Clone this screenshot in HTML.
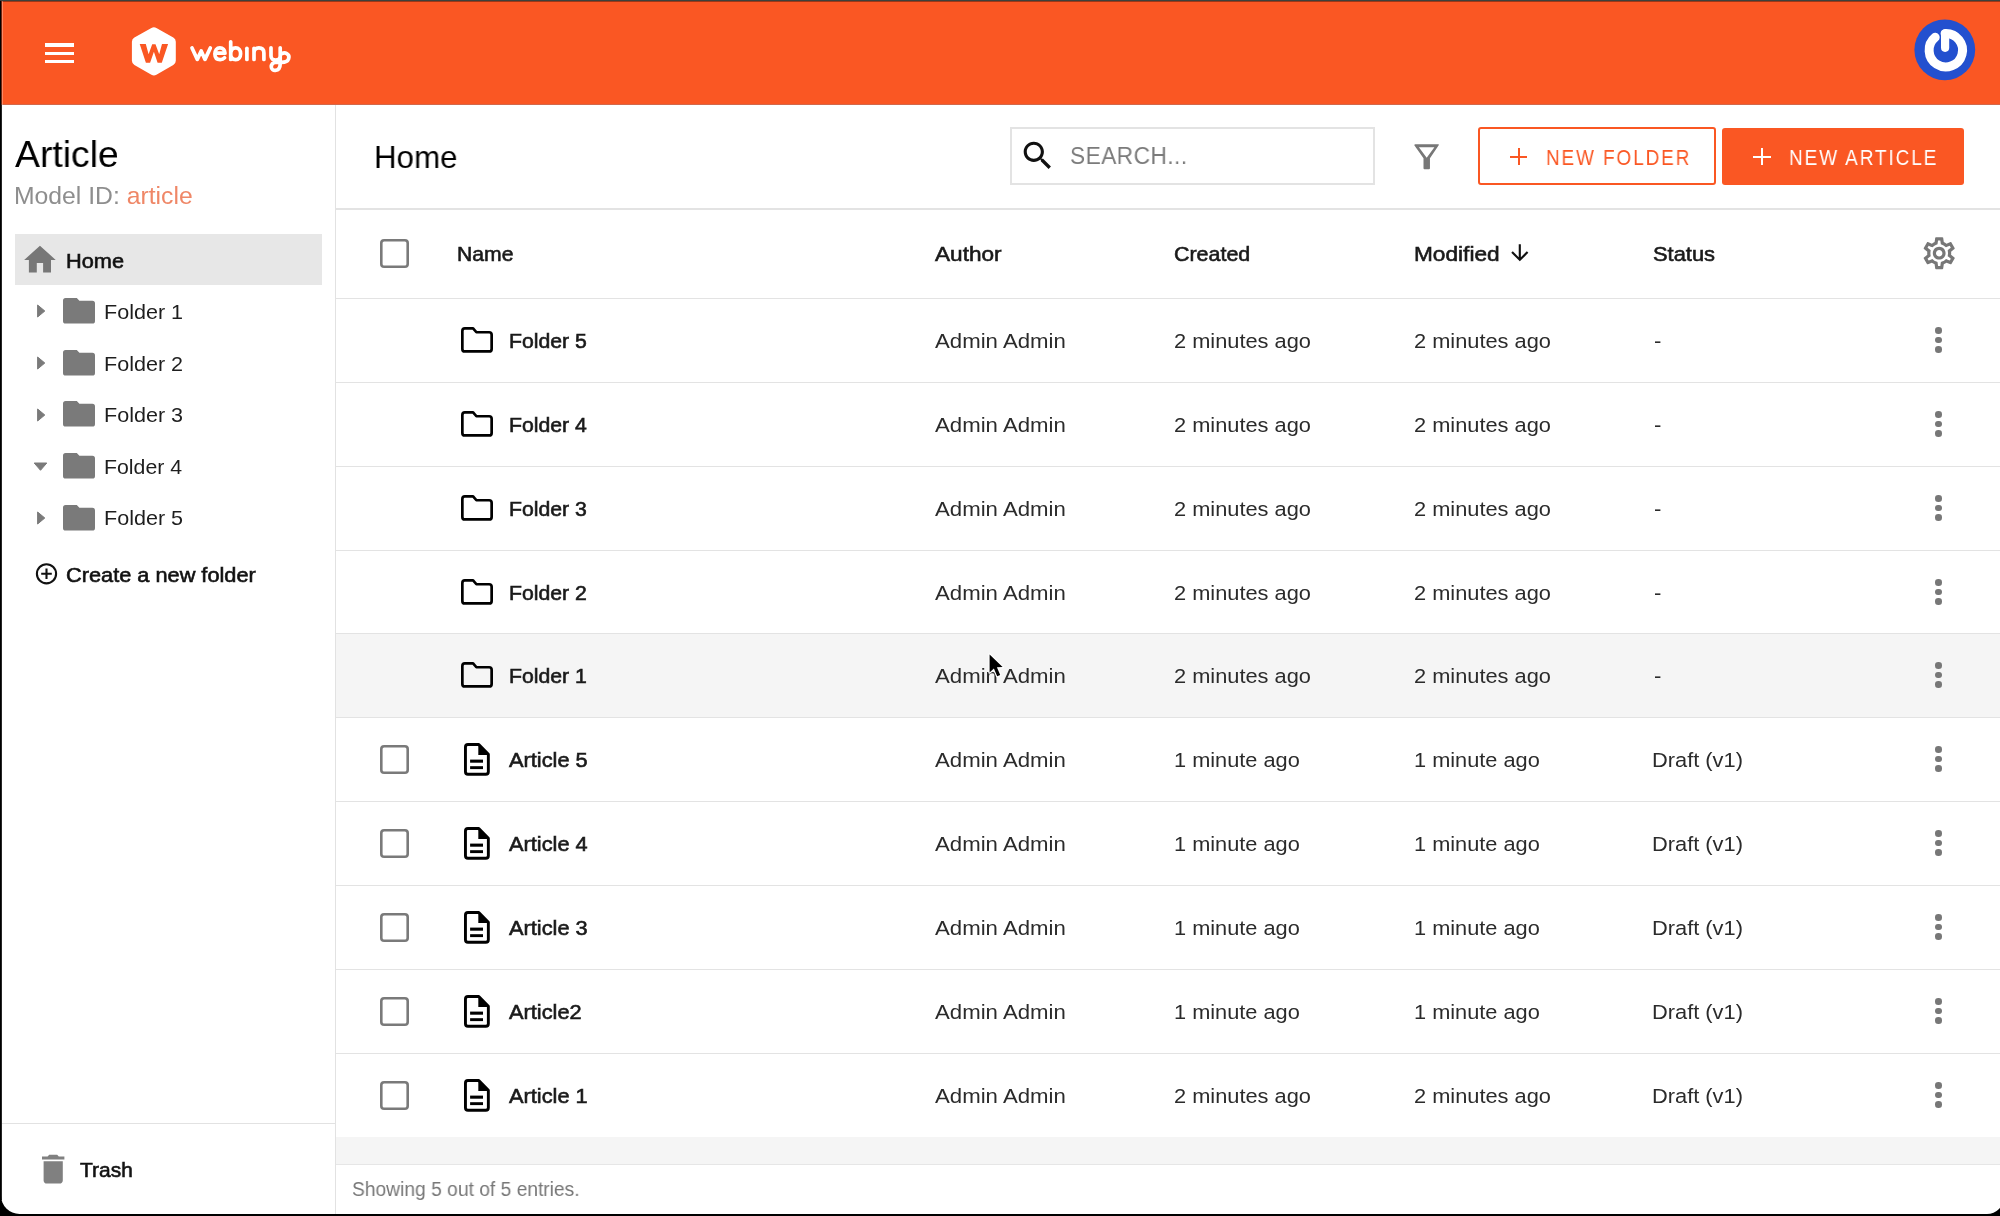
<!DOCTYPE html>
<html><head><meta charset="utf-8"><style>
html,body{margin:0;padding:0;width:2000px;height:1216px;overflow:hidden;background:#000;}
#app{position:absolute;left:1px;top:1px;width:2003px;height:1213px;background:#fff;border-radius:0 0 17px 18.5px;overflow:hidden;}
#topline{position:absolute;left:0;top:0;width:2000px;height:1px;background:#3b413d;}
.t{position:absolute;font-family:'Liberation Sans', sans-serif;line-height:1;white-space:nowrap;transform-origin:0 0;will-change:transform;}
.i{position:absolute;display:block;overflow:visible;}
.cb{position:absolute;width:23.6px;height:23.6px;border:2.7px solid #767676;border-radius:3.5px;}
.dot{position:absolute;width:6.6px;height:6.6px;border-radius:50%;background:#777;}
.hl{position:absolute;left:336px;width:1670px;height:1px;background:#e3e3e3;}
</style></head><body>
<div id="app">
<div id="rows" style="position:absolute;left:-1px;top:-1px;width:2005px;height:1216px;">
<!-- header -->
<div style="position:absolute;left:0;top:0;width:2005px;height:104px;background:#fa5723;"></div><div style="position:absolute;left:0;top:104px;width:2005px;height:1px;background:#d2694c;"></div>
<!-- hamburger -->
<div style="position:absolute;left:44.8px;top:43.3px;width:29.5px;height:3.3px;background:#fff"></div>
<div style="position:absolute;left:44.8px;top:51.5px;width:29.5px;height:3.3px;background:#fff"></div>
<div style="position:absolute;left:44.8px;top:59.6px;width:29.5px;height:3.3px;background:#fff"></div>
<!-- logo -->
<svg class="i" style="left:125px;top:20px" width="60" height="60" viewBox="125 20 60 60">
<path d="M151.4,27.9 Q153.9,26.6 156.4,27.9 L173.3,37.6 Q175.8,39 175.8,41.8 L175.8,60.8 Q175.8,63.6 173.3,65 L156.4,74.7 Q153.9,76.1 151.4,74.7 L134.4,65 Q131.9,63.6 131.9,60.8 L131.9,41.8 Q131.9,39 134.4,37.6 Z" fill="#fff"/>
<path d="M139.7,43.9 L145.8,43.9 L148.6,54.2 L152.2,44.2 L155.5,44.2 L159.2,54.2 L162,43.9 L168.1,43.9 L161.8,62.7 L157.6,62.7 L153.9,51.8 L150.1,62.7 L145.9,62.7 Z" fill="#fa5723"/>
</svg>
<svg class="i" style="left:185px;top:30px" width="110" height="50" viewBox="185 30 110 50">
<g fill="none" stroke="#fff" stroke-width="3.7" stroke-linecap="round" stroke-linejoin="round">
<path d="M192,48 L197.3,59.4 L201.2,51 L205,59.4 L210.3,48"/>
<path d="M214.9,53.2 L225,53.2 C225,49.8 222.8,47.8 219.9,47.8 C216.8,47.8 214.9,50.4 214.9,54 C214.9,57.7 217.1,59.6 220.2,59.6 C222.2,59.6 223.6,58.9 224.6,57.8"/>
<path d="M230.7,41.8 L230.7,59.4 M230.7,54 C230.7,50.3 232.6,47.8 235.7,47.8 C238.6,47.8 240.6,50.3 240.6,53.7 C240.6,57.2 238.6,59.6 235.7,59.6 C232.6,59.6 230.7,57.5 230.7,54"/>
<path d="M246.9,48.3 L246.9,59.4"/>
<path d="M254,59.4 L254,48.3 M254,53 C254,49.8 255.8,47.9 258.9,47.9 C262.1,47.9 263.9,49.8 263.9,53 L263.9,59.4"/>
<path d="M271,47.8 L271,56 C271,58.6 273,60.1 275.6,60.1 C278.2,60.1 280.2,58.6 280.2,56 M282,53.6 C283.5,52.8 285.3,52.8 286.8,53.6 C288.6,54.6 289.3,56.8 288.6,58.8 C287.7,61.3 284.8,62.3 281.5,62.3 L275.5,62.3 C272.8,62.3 271.2,64.5 271.3,67 C271.4,69.3 273.3,70.6 275.3,70.4 C278.3,70.1 280.2,67.6 280.2,64 L280.2,47.8"/>
</g></svg>
<!-- avatar -->
<svg class="i" style="left:1910px;top:15px" width="70" height="70" viewBox="1910 15 70 70">
<circle cx="1944.8" cy="49.8" r="30.4" fill="#2350cf"/>
<path d="M1935.2,37.3 A16.7,16.7 0 1 0 1945.1,33.5" fill="none" stroke="#fff" stroke-width="9" stroke-linecap="round"/>
<path d="M1945.1,33.5 L1945.1,47.8" fill="none" stroke="#fff" stroke-width="8.2" stroke-linecap="round"/>
</svg>

<!-- sidebar -->
<div style="position:absolute;left:335px;top:104.5px;width:1px;height:1112px;background:#e2e2e2"></div>
<div style="position:absolute;left:15px;top:234px;width:307px;height:51px;background:#e7e7e7"></div>
<svg class="i" style="left:21.3px;top:240.8px" width="37.9" height="37.9" viewBox="0 0 24 24"><path d="M10 20v-6h4v6h5v-8h3L12 3 2 12h3v8z" fill="#777"/></svg>
<svg class="i" style="left:36.2px;top:563.2px" width="22" height="22" viewBox="0 0 22 22"><circle cx="10.5" cy="10.8" r="9.6" fill="none" stroke="#111" stroke-width="2.1"/><path d="M5.2,10.8 H15.8 M10.5,5.5 V16.1" stroke="#111" stroke-width="2.1"/></svg>
<div style="position:absolute;left:2px;top:1122.5px;width:333px;height:1px;background:#e2e2e2"></div>
<svg class="i" style="left:34px;top:1149.9px" width="38.4" height="38.4" viewBox="0 0 24 24"><path d="M6 19c0 1.1.9 2 2 2h8c1.1 0 2-.9 2-2V7H6v12zM19 4h-3.5l-1-1h-5l-1 1H5v2h14V4z" fill="#808080"/></svg>

<!-- toolbar -->
<div style="position:absolute;left:1010px;top:127px;width:361px;height:54px;border:2px solid #e3e3e3;background:#fff"></div>
<svg class="i" style="left:1019.1px;top:137.3px" width="37.4" height="37.4" viewBox="0 0 24 24"><path d="M15.5 14h-.79l-.28-.27C15.41 12.59 16 11.11 16 9.5 16 5.91 13.09 3 9.5 3S3 5.91 3 9.5 5.91 16 9.5 16c1.61 0 3.090-.59 4.23-1.57l.27.28v.79l5 4.99L20.49 19l-4.990-5zm-6 0C7.01 14 5 11.99 5 9.5S7.01 5 9.5 5 14 7.01 14 9.5 11.99 14 9.5 14z" fill="#111"/></svg>
<svg class="i" style="left:1413.8px;top:143.7px" width="26" height="26" viewBox="0 0 26 26"><path d="M0.3,1.2 Q0.3,0.2 1.3,0.2 L24.3,0.2 Q25.3,0.2 24.7,1.2 L15.95,14.3 L15.95,24.2 Q15.95,25.2 14.95,25.2 L10.5,25.2 Q9.5,25.2 9.5,24.2 L9.5,14.3 Z M4.9,3.3 L12.7,13.65 L20.4,3.3 Z" fill="#777" fill-rule="evenodd"/></svg>
<div style="position:absolute;left:1478.1px;top:127.1px;width:233.5px;height:54.2px;border:2px solid #fa5723;border-radius:3px;"></div>
<div style="position:absolute;left:1509.75px;top:155.6px;width:17.5px;height:2px;background:#fa5723"></div>
<div style="position:absolute;left:1517.5px;top:148.1px;width:2px;height:17px;background:#fa5723"></div>
<div style="position:absolute;left:1722.2px;top:127.5px;width:241.8px;height:57.5px;background:#fa5723;border-radius:3px;"></div>
<div style="position:absolute;left:1753.4px;top:155.7px;width:17.5px;height:2px;background:#fff"></div>
<div style="position:absolute;left:1761.1px;top:148px;width:2px;height:17.3px;background:#fff"></div>
<div style="position:absolute;left:336px;top:208px;width:1670px;height:1.5px;background:#e3e3e3"></div>

<!-- table header -->
<svg class="i" style="left:380px;top:238.8px" width="29" height="29" viewBox="0 0 29 29"><rect x="1.3" y="1.3" width="26.4" height="26.4" rx="2.8" fill="none" stroke="#7a7a7a" stroke-width="2.6"/></svg>
<svg class="i" style="left:1506.9px;top:240.3px" width="25.6" height="25.6" viewBox="0 0 24 24"><path d="M20 12l-1.41-1.41L13 16.17V4h-2v12.17l-5.58-5.59L4 12l8 8 8-8z" fill="#111"/></svg>
<svg class="i" style="left:1919.8px;top:233.9px" width="38.4" height="38.4" viewBox="0 0 24 24"><path d="M19.43 12.98c.04-.32.07-.64.07-.98 0-.34-.03-.66-.07-.98l2.11-1.65c.19-.15.24-.42.12-.64l-2-3.46c-.09-.16-.26-.25-.44-.25-.06 0-.12.01-.17.03l-2.49 1c-.52-.4-1.080-.73-1.69-.98l-.38-2.65C14.46 2.18 14.25 2 14 2h-4c-.25 0-.46.18-.49.42l-.38 2.65c-.61.25-1.17.59-1.69.98l-2.49-1c-.06-.02-.12-.03-.18-.03-.17 0-.34.09-.43.25l-2 3.46c-.13.22-.07.49.12.64l2.11 1.65c-.04.32-.07.65-.07.98 0 .33.03.66.07.98l-2.11 1.65c-.19.15-.24.42-.12.64l2 3.46c.09.16.26.25.44.25.06 0 .12-.01.17-.03l2.49-1c.52.4 1.080.73 1.69.98l.38 2.65c.03.24.24.42.49.42h4c.25 0 .46-.18.49-.42l.38-2.65c.61-.25 1.17-.59 1.69-.98l2.49 1c.06.02.12.03.18.03.17 0 .34-.09.43-.25l2-3.46c.12-.22.07-.49-.12-.64l-2.11-1.65zm-1.98-1.71c.04.31.05.52.05.73 0 .21-.02.43-.05.73l-.14 1.13.89.7 1.080.84-.7 1.21-1.27-.51-1.040-.42-.9.68c-.43.32-.84.56-1.25.73l-1.060.43-.16 1.13-.2 1.35h-1.4l-.19-1.35-.16-1.13-1.060-.43c-.43-.18-.83-.41-1.23-.71l-.91-.7-1.060.43-1.27.51-.7-1.21 1.080-.84.89-.7-.14-1.13c-.03-.31-.05-.54-.05-.74s.02-.43.05-.73l.14-1.13-.89-.7-1.080-.84.7-1.21 1.27.51 1.040.42.9-.68c.43-.32.84-.56 1.25-.73l1.060-.43.16-1.13.2-1.35h1.39l.19 1.35.16 1.13 1.060.43c.43.18.83.41 1.23.71l.91.7 1.060-.43 1.27-.51.7 1.21-1.070.85-.89.7.14 1.13zM12 8c-2.21 0-4 1.79-4 4s1.79 4 4 4 4-1.79 4-4-1.79-4-4-4zm0 6c-1.1 0-2-.9-2-2s.9-2 2-2 2 .9 2 2-.9 2-2 2z" fill="#777"/></svg>

<!-- rows -->
<div style="position:absolute;left:336px;top:633px;width:1670px;height:84px;background:#f5f5f5"></div>
<div class="hl" style="top:298px"></div><div class="hl" style="top:382px"></div><div class="hl" style="top:466px"></div><div class="hl" style="top:550px"></div><div class="hl" style="top:633px"></div><div class="hl" style="top:717px"></div><div class="hl" style="top:801px"></div><div class="hl" style="top:885px"></div><div class="hl" style="top:969px"></div><div class="hl" style="top:1053px"></div>
<div style="position:absolute;left:336px;top:1137px;width:1670px;height:27px;background:#f5f5f5"></div>
<div style="position:absolute;left:336px;top:1164px;width:1670px;height:1px;background:#e6e6e6"></div>
<svg class="i" style="left:36px;top:304.30px" width="10" height="14" viewBox="0 0 10 14"><path d="M1.6,1 L8.8,7 L1.6,13 Z" fill="#7a7a7a" stroke="#7a7a7a" stroke-width="1" stroke-linejoin="round"/></svg><svg class="i" style="left:63.1px;top:298.2px" width="32" height="26" viewBox="0 0 32 26"><path d="M0,2.6 Q0,0 2.6,0 L13.8,0 L16.4,2.8 L29.4,2.8 Q32,2.8 32,5.4 L32,23 Q32,25.6 29.4,25.6 L2.6,25.6 Q0,25.6 0,23 Z" fill="#7a7a7a"/></svg><svg class="i" style="left:36px;top:355.90px" width="10" height="14" viewBox="0 0 10 14"><path d="M1.6,1 L8.8,7 L1.6,13 Z" fill="#7a7a7a" stroke="#7a7a7a" stroke-width="1" stroke-linejoin="round"/></svg><svg class="i" style="left:63.1px;top:349.8px" width="32" height="26" viewBox="0 0 32 26"><path d="M0,2.6 Q0,0 2.6,0 L13.8,0 L16.4,2.8 L29.4,2.8 Q32,2.8 32,5.4 L32,23 Q32,25.6 29.4,25.6 L2.6,25.6 Q0,25.6 0,23 Z" fill="#7a7a7a"/></svg><svg class="i" style="left:36px;top:407.50px" width="10" height="14" viewBox="0 0 10 14"><path d="M1.6,1 L8.8,7 L1.6,13 Z" fill="#7a7a7a" stroke="#7a7a7a" stroke-width="1" stroke-linejoin="round"/></svg><svg class="i" style="left:63.1px;top:401.4px" width="32" height="26" viewBox="0 0 32 26"><path d="M0,2.6 Q0,0 2.6,0 L13.8,0 L16.4,2.8 L29.4,2.8 Q32,2.8 32,5.4 L32,23 Q32,25.6 29.4,25.6 L2.6,25.6 Q0,25.6 0,23 Z" fill="#7a7a7a"/></svg><svg class="i" style="left:33px;top:461.10px" width="15" height="10" viewBox="0 0 15 10"><path d="M1.2,2 L13.8,2 L7.5,9.3 Z" fill="#7a7a7a" stroke="#7a7a7a" stroke-width="1" stroke-linejoin="round"/></svg><svg class="i" style="left:63.1px;top:453.0px" width="32" height="26" viewBox="0 0 32 26"><path d="M0,2.6 Q0,0 2.6,0 L13.8,0 L16.4,2.8 L29.4,2.8 Q32,2.8 32,5.4 L32,23 Q32,25.6 29.4,25.6 L2.6,25.6 Q0,25.6 0,23 Z" fill="#7a7a7a"/></svg><svg class="i" style="left:36px;top:510.70px" width="10" height="14" viewBox="0 0 10 14"><path d="M1.6,1 L8.8,7 L1.6,13 Z" fill="#7a7a7a" stroke="#7a7a7a" stroke-width="1" stroke-linejoin="round"/></svg><svg class="i" style="left:63.1px;top:504.6px" width="32" height="26" viewBox="0 0 32 26"><path d="M0,2.6 Q0,0 2.6,0 L13.8,0 L16.4,2.8 L29.4,2.8 Q32,2.8 32,5.4 L32,23 Q32,25.6 29.4,25.6 L2.6,25.6 Q0,25.6 0,23 Z" fill="#7a7a7a"/></svg><svg class="i" style="left:460.8px;top:327.1px" width="32" height="26" viewBox="0 0 32 26"><path d="M1.35,3.9 Q1.35,1.35 3.9,1.35 L12.1,1.35 L15.4,5.25 L28.1,5.25 Q30.65,5.25 30.65,7.8 L30.65,21.9 Q30.65,24.45 28.1,24.45 L3.9,24.45 Q1.35,24.45 1.35,21.9 Z" fill="none" stroke="#000" stroke-width="2.7" stroke-linejoin="round"/></svg><div class="dot" style="left:1935.30px;top:327.00px"></div><div class="dot" style="left:1935.30px;top:336.70px"></div><div class="dot" style="left:1935.30px;top:346.20px"></div><svg class="i" style="left:460.8px;top:411.1px" width="32" height="26" viewBox="0 0 32 26"><path d="M1.35,3.9 Q1.35,1.35 3.9,1.35 L12.1,1.35 L15.4,5.25 L28.1,5.25 Q30.65,5.25 30.65,7.8 L30.65,21.9 Q30.65,24.45 28.1,24.45 L3.9,24.45 Q1.35,24.45 1.35,21.9 Z" fill="none" stroke="#000" stroke-width="2.7" stroke-linejoin="round"/></svg><div class="dot" style="left:1935.30px;top:411.00px"></div><div class="dot" style="left:1935.30px;top:420.70px"></div><div class="dot" style="left:1935.30px;top:430.20px"></div><svg class="i" style="left:460.8px;top:495.1px" width="32" height="26" viewBox="0 0 32 26"><path d="M1.35,3.9 Q1.35,1.35 3.9,1.35 L12.1,1.35 L15.4,5.25 L28.1,5.25 Q30.65,5.25 30.65,7.8 L30.65,21.9 Q30.65,24.45 28.1,24.45 L3.9,24.45 Q1.35,24.45 1.35,21.9 Z" fill="none" stroke="#000" stroke-width="2.7" stroke-linejoin="round"/></svg><div class="dot" style="left:1935.30px;top:495.00px"></div><div class="dot" style="left:1935.30px;top:504.70px"></div><div class="dot" style="left:1935.30px;top:514.20px"></div><svg class="i" style="left:460.8px;top:579.1px" width="32" height="26" viewBox="0 0 32 26"><path d="M1.35,3.9 Q1.35,1.35 3.9,1.35 L12.1,1.35 L15.4,5.25 L28.1,5.25 Q30.65,5.25 30.65,7.8 L30.65,21.9 Q30.65,24.45 28.1,24.45 L3.9,24.45 Q1.35,24.45 1.35,21.9 Z" fill="none" stroke="#000" stroke-width="2.7" stroke-linejoin="round"/></svg><div class="dot" style="left:1935.30px;top:579.00px"></div><div class="dot" style="left:1935.30px;top:588.70px"></div><div class="dot" style="left:1935.30px;top:598.20px"></div><svg class="i" style="left:460.8px;top:662.1px" width="32" height="26" viewBox="0 0 32 26"><path d="M1.35,3.9 Q1.35,1.35 3.9,1.35 L12.1,1.35 L15.4,5.25 L28.1,5.25 Q30.65,5.25 30.65,7.8 L30.65,21.9 Q30.65,24.45 28.1,24.45 L3.9,24.45 Q1.35,24.45 1.35,21.9 Z" fill="none" stroke="#000" stroke-width="2.7" stroke-linejoin="round"/></svg><div class="dot" style="left:1935.30px;top:662.00px"></div><div class="dot" style="left:1935.30px;top:671.70px"></div><div class="dot" style="left:1935.30px;top:681.20px"></div><svg class="i" style="left:380px;top:745px" width="29" height="29" viewBox="0 0 29 29"><rect x="1.3" y="1.3" width="26.4" height="26.4" rx="2.8" fill="none" stroke="#7a7a7a" stroke-width="2.6"/></svg><svg class="i" style="left:464px;top:742.8px" width="26" height="33" viewBox="0 0 26 33"><path d="M1.45,4 Q1.45,1.45 4,1.45 L14.8,1.45 L24.35,11.2 L24.35,28.7 Q24.35,31.25 21.8,31.25 L4,31.25 Q1.45,31.25 1.45,28.7 Z" fill="none" stroke="#000" stroke-width="2.9" stroke-linejoin="round"/><path d="M14.3,1 L25,11.5 L25,11.9 L14.3,11.9 Z" fill="#000"/><rect x="6.1" y="16.6" width="12.9" height="3.1" fill="#000"/><rect x="6.1" y="23.2" width="12.9" height="2.9" fill="#000"/></svg><div class="dot" style="left:1935.30px;top:746.00px"></div><div class="dot" style="left:1935.30px;top:755.70px"></div><div class="dot" style="left:1935.30px;top:765.20px"></div><svg class="i" style="left:380px;top:829px" width="29" height="29" viewBox="0 0 29 29"><rect x="1.3" y="1.3" width="26.4" height="26.4" rx="2.8" fill="none" stroke="#7a7a7a" stroke-width="2.6"/></svg><svg class="i" style="left:464px;top:826.8px" width="26" height="33" viewBox="0 0 26 33"><path d="M1.45,4 Q1.45,1.45 4,1.45 L14.8,1.45 L24.35,11.2 L24.35,28.7 Q24.35,31.25 21.8,31.25 L4,31.25 Q1.45,31.25 1.45,28.7 Z" fill="none" stroke="#000" stroke-width="2.9" stroke-linejoin="round"/><path d="M14.3,1 L25,11.5 L25,11.9 L14.3,11.9 Z" fill="#000"/><rect x="6.1" y="16.6" width="12.9" height="3.1" fill="#000"/><rect x="6.1" y="23.2" width="12.9" height="2.9" fill="#000"/></svg><div class="dot" style="left:1935.30px;top:830.00px"></div><div class="dot" style="left:1935.30px;top:839.70px"></div><div class="dot" style="left:1935.30px;top:849.20px"></div><svg class="i" style="left:380px;top:913px" width="29" height="29" viewBox="0 0 29 29"><rect x="1.3" y="1.3" width="26.4" height="26.4" rx="2.8" fill="none" stroke="#7a7a7a" stroke-width="2.6"/></svg><svg class="i" style="left:464px;top:910.8px" width="26" height="33" viewBox="0 0 26 33"><path d="M1.45,4 Q1.45,1.45 4,1.45 L14.8,1.45 L24.35,11.2 L24.35,28.7 Q24.35,31.25 21.8,31.25 L4,31.25 Q1.45,31.25 1.45,28.7 Z" fill="none" stroke="#000" stroke-width="2.9" stroke-linejoin="round"/><path d="M14.3,1 L25,11.5 L25,11.9 L14.3,11.9 Z" fill="#000"/><rect x="6.1" y="16.6" width="12.9" height="3.1" fill="#000"/><rect x="6.1" y="23.2" width="12.9" height="2.9" fill="#000"/></svg><div class="dot" style="left:1935.30px;top:914.00px"></div><div class="dot" style="left:1935.30px;top:923.70px"></div><div class="dot" style="left:1935.30px;top:933.20px"></div><svg class="i" style="left:380px;top:997px" width="29" height="29" viewBox="0 0 29 29"><rect x="1.3" y="1.3" width="26.4" height="26.4" rx="2.8" fill="none" stroke="#7a7a7a" stroke-width="2.6"/></svg><svg class="i" style="left:464px;top:994.8px" width="26" height="33" viewBox="0 0 26 33"><path d="M1.45,4 Q1.45,1.45 4,1.45 L14.8,1.45 L24.35,11.2 L24.35,28.7 Q24.35,31.25 21.8,31.25 L4,31.25 Q1.45,31.25 1.45,28.7 Z" fill="none" stroke="#000" stroke-width="2.9" stroke-linejoin="round"/><path d="M14.3,1 L25,11.5 L25,11.9 L14.3,11.9 Z" fill="#000"/><rect x="6.1" y="16.6" width="12.9" height="3.1" fill="#000"/><rect x="6.1" y="23.2" width="12.9" height="2.9" fill="#000"/></svg><div class="dot" style="left:1935.30px;top:998.00px"></div><div class="dot" style="left:1935.30px;top:1007.70px"></div><div class="dot" style="left:1935.30px;top:1017.20px"></div><svg class="i" style="left:380px;top:1081px" width="29" height="29" viewBox="0 0 29 29"><rect x="1.3" y="1.3" width="26.4" height="26.4" rx="2.8" fill="none" stroke="#7a7a7a" stroke-width="2.6"/></svg><svg class="i" style="left:464px;top:1078.8px" width="26" height="33" viewBox="0 0 26 33"><path d="M1.45,4 Q1.45,1.45 4,1.45 L14.8,1.45 L24.35,11.2 L24.35,28.7 Q24.35,31.25 21.8,31.25 L4,31.25 Q1.45,31.25 1.45,28.7 Z" fill="none" stroke="#000" stroke-width="2.9" stroke-linejoin="round"/><path d="M14.3,1 L25,11.5 L25,11.9 L14.3,11.9 Z" fill="#000"/><rect x="6.1" y="16.6" width="12.9" height="3.1" fill="#000"/><rect x="6.1" y="23.2" width="12.9" height="2.9" fill="#000"/></svg><div class="dot" style="left:1935.30px;top:1082.00px"></div><div class="dot" style="left:1935.30px;top:1091.70px"></div><div class="dot" style="left:1935.30px;top:1101.20px"></div>
<div class="t" style="left:15.00px;top:136.00px;font-weight:400;font-size:37.7px;color:#000;letter-spacing:0px;transform:scaleX(0.9903);">Article</div>
<div class="t" style="left:13.99px;top:184.00px;font-weight:400;font-size:24.6px;color:#8e8e8e;letter-spacing:0px;transform:scaleX(1.0057);">Model ID: <span style="color:#ef8767">article</span></div>
<div class="t" style="left:66.46px;top:249.80px;font-weight:400;-webkit-text-stroke:0.6px #111;font-size:21px;color:#111;letter-spacing:0px;transform:scaleX(1.0364);">Home</div>
<div class="t" style="left:104.45px;top:301.00px;font-weight:400;font-size:21px;color:#1e1e1e;letter-spacing:0px;transform:scaleX(1.0270);">Folder 1</div>
<div class="t" style="left:104.45px;top:352.60px;font-weight:400;font-size:21px;color:#1e1e1e;letter-spacing:0px;transform:scaleX(1.0270);">Folder 2</div>
<div class="t" style="left:104.45px;top:404.20px;font-weight:400;font-size:21px;color:#1e1e1e;letter-spacing:0px;transform:scaleX(1.0270);">Folder 3</div>
<div class="t" style="left:104.47px;top:455.80px;font-weight:400;font-size:21px;color:#1e1e1e;letter-spacing:0px;transform:scaleX(1.0133);">Folder 4</div>
<div class="t" style="left:104.45px;top:507.40px;font-weight:400;font-size:21px;color:#1e1e1e;letter-spacing:0px;transform:scaleX(1.0270);">Folder 5</div>
<div class="t" style="left:66.44px;top:564.60px;font-weight:400;-webkit-text-stroke:0.6px #111;font-size:20.5px;color:#111;letter-spacing:0px;transform:scaleX(1.0607);">Create a new folder</div>
<div class="t" style="left:79.80px;top:1158.90px;font-weight:400;-webkit-text-stroke:0.6px #111;font-size:21px;color:#111;letter-spacing:0px;transform:scaleX(0.9981);">Trash</div>
<div class="t" style="left:374.03px;top:142.10px;font-weight:400;font-size:31.6px;color:#000;letter-spacing:0px;transform:scaleX(0.9900);">Home</div>
<div class="t" style="left:1069.82px;top:144.25px;font-weight:400;font-size:24.3px;color:#7b7b7b;letter-spacing:0.5px;transform:scaleX(0.9329);">SEARCH...</div>
<div class="t" style="left:1546.01px;top:146.60px;font-weight:400;font-size:21.7px;color:#fa5723;letter-spacing:2.2px;transform:scaleX(0.8720);">NEW FOLDER</div>
<div class="t" style="left:1789.27px;top:146.90px;font-weight:400;font-size:22px;color:#fff;letter-spacing:2.2px;transform:scaleX(0.8631);">NEW ARTICLE</div>
<div class="t" style="left:457.38px;top:244.20px;font-weight:400;-webkit-text-stroke:0.6px #1a1a1a;font-size:20.7px;color:#1a1a1a;letter-spacing:0px;transform:scaleX(1.0222);">Name</div>
<div class="t" style="left:935.00px;top:244.20px;font-weight:400;-webkit-text-stroke:0.6px #1a1a1a;font-size:20.7px;color:#1a1a1a;letter-spacing:0px;transform:scaleX(1.0918);">Author</div>
<div class="t" style="left:1173.96px;top:244.20px;font-weight:400;-webkit-text-stroke:0.6px #1a1a1a;font-size:20.7px;color:#1a1a1a;letter-spacing:0px;transform:scaleX(1.0361);">Created</div>
<div class="t" style="left:1414.11px;top:244.20px;font-weight:400;-webkit-text-stroke:0.6px #1a1a1a;font-size:20.7px;color:#1a1a1a;letter-spacing:0px;transform:scaleX(1.0947);">Modified</div>
<div class="t" style="left:1653.34px;top:244.20px;font-weight:400;-webkit-text-stroke:0.6px #1a1a1a;font-size:20.7px;color:#1a1a1a;letter-spacing:0px;transform:scaleX(1.0579);">Status</div>
<div class="t" style="left:509.36px;top:331.00px;font-weight:400;-webkit-text-stroke:0.6px #1a1a1a;font-size:20.5px;color:#1a1a1a;letter-spacing:0px;transform:scaleX(1.0351);">Folder 5</div>
<div class="t" style="left:935.00px;top:331.00px;font-weight:400;font-size:20.5px;color:#2b2b2b;letter-spacing:0px;transform:scaleX(1.0833);">Admin Admin</div>
<div class="t" style="left:1173.94px;top:331.00px;font-weight:400;font-size:20.5px;color:#2b2b2b;letter-spacing:0px;transform:scaleX(1.0630);">2 minutes ago</div>
<div class="t" style="left:1414.24px;top:331.00px;font-weight:400;font-size:20.5px;color:#2b2b2b;letter-spacing:0px;transform:scaleX(1.0630);">2 minutes ago</div>
<div class="t" style="left:1653.52px;top:331.00px;font-weight:400;font-size:20.5px;color:#2b2b2b;letter-spacing:0px;transform:scaleX(1.0800);">-</div>
<div class="t" style="left:509.36px;top:415.00px;font-weight:400;-webkit-text-stroke:0.6px #1a1a1a;font-size:20.5px;color:#1a1a1a;letter-spacing:0px;transform:scaleX(1.0351);">Folder 4</div>
<div class="t" style="left:935.00px;top:415.00px;font-weight:400;font-size:20.5px;color:#2b2b2b;letter-spacing:0px;transform:scaleX(1.0833);">Admin Admin</div>
<div class="t" style="left:1173.94px;top:415.00px;font-weight:400;font-size:20.5px;color:#2b2b2b;letter-spacing:0px;transform:scaleX(1.0630);">2 minutes ago</div>
<div class="t" style="left:1414.24px;top:415.00px;font-weight:400;font-size:20.5px;color:#2b2b2b;letter-spacing:0px;transform:scaleX(1.0630);">2 minutes ago</div>
<div class="t" style="left:1653.52px;top:415.00px;font-weight:400;font-size:20.5px;color:#2b2b2b;letter-spacing:0px;transform:scaleX(1.0800);">-</div>
<div class="t" style="left:509.36px;top:499.00px;font-weight:400;-webkit-text-stroke:0.6px #1a1a1a;font-size:20.5px;color:#1a1a1a;letter-spacing:0px;transform:scaleX(1.0351);">Folder 3</div>
<div class="t" style="left:935.00px;top:499.00px;font-weight:400;font-size:20.5px;color:#2b2b2b;letter-spacing:0px;transform:scaleX(1.0833);">Admin Admin</div>
<div class="t" style="left:1173.94px;top:499.00px;font-weight:400;font-size:20.5px;color:#2b2b2b;letter-spacing:0px;transform:scaleX(1.0630);">2 minutes ago</div>
<div class="t" style="left:1414.24px;top:499.00px;font-weight:400;font-size:20.5px;color:#2b2b2b;letter-spacing:0px;transform:scaleX(1.0630);">2 minutes ago</div>
<div class="t" style="left:1653.52px;top:499.00px;font-weight:400;font-size:20.5px;color:#2b2b2b;letter-spacing:0px;transform:scaleX(1.0800);">-</div>
<div class="t" style="left:509.36px;top:583.00px;font-weight:400;-webkit-text-stroke:0.6px #1a1a1a;font-size:20.5px;color:#1a1a1a;letter-spacing:0px;transform:scaleX(1.0351);">Folder 2</div>
<div class="t" style="left:935.00px;top:583.00px;font-weight:400;font-size:20.5px;color:#2b2b2b;letter-spacing:0px;transform:scaleX(1.0833);">Admin Admin</div>
<div class="t" style="left:1173.94px;top:583.00px;font-weight:400;font-size:20.5px;color:#2b2b2b;letter-spacing:0px;transform:scaleX(1.0630);">2 minutes ago</div>
<div class="t" style="left:1414.24px;top:583.00px;font-weight:400;font-size:20.5px;color:#2b2b2b;letter-spacing:0px;transform:scaleX(1.0630);">2 minutes ago</div>
<div class="t" style="left:1653.52px;top:583.00px;font-weight:400;font-size:20.5px;color:#2b2b2b;letter-spacing:0px;transform:scaleX(1.0800);">-</div>
<div class="t" style="left:509.36px;top:666.00px;font-weight:400;-webkit-text-stroke:0.6px #1a1a1a;font-size:20.5px;color:#1a1a1a;letter-spacing:0px;transform:scaleX(1.0351);">Folder 1</div>
<div class="t" style="left:935.00px;top:666.00px;font-weight:400;font-size:20.5px;color:#2b2b2b;letter-spacing:0px;transform:scaleX(1.0833);">Admin Admin</div>
<div class="t" style="left:1173.94px;top:666.00px;font-weight:400;font-size:20.5px;color:#2b2b2b;letter-spacing:0px;transform:scaleX(1.0630);">2 minutes ago</div>
<div class="t" style="left:1414.24px;top:666.00px;font-weight:400;font-size:20.5px;color:#2b2b2b;letter-spacing:0px;transform:scaleX(1.0630);">2 minutes ago</div>
<div class="t" style="left:1653.52px;top:666.00px;font-weight:400;font-size:20.5px;color:#2b2b2b;letter-spacing:0px;transform:scaleX(1.0800);">-</div>
<div class="t" style="left:509.30px;top:750.00px;font-weight:400;-webkit-text-stroke:0.6px #1a1a1a;font-size:20.5px;color:#1a1a1a;letter-spacing:0px;transform:scaleX(1.0622);">Article 5</div>
<div class="t" style="left:935.00px;top:750.00px;font-weight:400;font-size:20.5px;color:#2b2b2b;letter-spacing:0px;transform:scaleX(1.0833);">Admin Admin</div>
<div class="t" style="left:1173.94px;top:750.00px;font-weight:400;font-size:20.5px;color:#2b2b2b;letter-spacing:0px;transform:scaleX(1.0615);">1 minute ago</div>
<div class="t" style="left:1414.24px;top:750.00px;font-weight:400;font-size:20.5px;color:#2b2b2b;letter-spacing:0px;transform:scaleX(1.0615);">1 minute ago</div>
<div class="t" style="left:1652.47px;top:750.00px;font-weight:400;font-size:20.5px;color:#2b2b2b;letter-spacing:0px;transform:scaleX(1.0646);">Draft (v1)</div>
<div class="t" style="left:509.30px;top:834.00px;font-weight:400;-webkit-text-stroke:0.6px #1a1a1a;font-size:20.5px;color:#1a1a1a;letter-spacing:0px;transform:scaleX(1.0622);">Article 4</div>
<div class="t" style="left:935.00px;top:834.00px;font-weight:400;font-size:20.5px;color:#2b2b2b;letter-spacing:0px;transform:scaleX(1.0833);">Admin Admin</div>
<div class="t" style="left:1173.94px;top:834.00px;font-weight:400;font-size:20.5px;color:#2b2b2b;letter-spacing:0px;transform:scaleX(1.0615);">1 minute ago</div>
<div class="t" style="left:1414.24px;top:834.00px;font-weight:400;font-size:20.5px;color:#2b2b2b;letter-spacing:0px;transform:scaleX(1.0615);">1 minute ago</div>
<div class="t" style="left:1652.47px;top:834.00px;font-weight:400;font-size:20.5px;color:#2b2b2b;letter-spacing:0px;transform:scaleX(1.0646);">Draft (v1)</div>
<div class="t" style="left:509.30px;top:918.00px;font-weight:400;-webkit-text-stroke:0.6px #1a1a1a;font-size:20.5px;color:#1a1a1a;letter-spacing:0px;transform:scaleX(1.0622);">Article 3</div>
<div class="t" style="left:935.00px;top:918.00px;font-weight:400;font-size:20.5px;color:#2b2b2b;letter-spacing:0px;transform:scaleX(1.0833);">Admin Admin</div>
<div class="t" style="left:1173.94px;top:918.00px;font-weight:400;font-size:20.5px;color:#2b2b2b;letter-spacing:0px;transform:scaleX(1.0615);">1 minute ago</div>
<div class="t" style="left:1414.24px;top:918.00px;font-weight:400;font-size:20.5px;color:#2b2b2b;letter-spacing:0px;transform:scaleX(1.0615);">1 minute ago</div>
<div class="t" style="left:1652.47px;top:918.00px;font-weight:400;font-size:20.5px;color:#2b2b2b;letter-spacing:0px;transform:scaleX(1.0646);">Draft (v1)</div>
<div class="t" style="left:509.30px;top:1002.00px;font-weight:400;-webkit-text-stroke:0.6px #1a1a1a;font-size:20.5px;color:#1a1a1a;letter-spacing:0px;transform:scaleX(1.0622);">Article2</div>
<div class="t" style="left:935.00px;top:1002.00px;font-weight:400;font-size:20.5px;color:#2b2b2b;letter-spacing:0px;transform:scaleX(1.0833);">Admin Admin</div>
<div class="t" style="left:1173.94px;top:1002.00px;font-weight:400;font-size:20.5px;color:#2b2b2b;letter-spacing:0px;transform:scaleX(1.0615);">1 minute ago</div>
<div class="t" style="left:1414.24px;top:1002.00px;font-weight:400;font-size:20.5px;color:#2b2b2b;letter-spacing:0px;transform:scaleX(1.0615);">1 minute ago</div>
<div class="t" style="left:1652.47px;top:1002.00px;font-weight:400;font-size:20.5px;color:#2b2b2b;letter-spacing:0px;transform:scaleX(1.0646);">Draft (v1)</div>
<div class="t" style="left:509.30px;top:1086.00px;font-weight:400;-webkit-text-stroke:0.6px #1a1a1a;font-size:20.5px;color:#1a1a1a;letter-spacing:0px;transform:scaleX(1.0622);">Article 1</div>
<div class="t" style="left:935.00px;top:1086.00px;font-weight:400;font-size:20.5px;color:#2b2b2b;letter-spacing:0px;transform:scaleX(1.0833);">Admin Admin</div>
<div class="t" style="left:1173.94px;top:1086.00px;font-weight:400;font-size:20.5px;color:#2b2b2b;letter-spacing:0px;transform:scaleX(1.0630);">2 minutes ago</div>
<div class="t" style="left:1414.24px;top:1086.00px;font-weight:400;font-size:20.5px;color:#2b2b2b;letter-spacing:0px;transform:scaleX(1.0630);">2 minutes ago</div>
<div class="t" style="left:1652.47px;top:1086.00px;font-weight:400;font-size:20.5px;color:#2b2b2b;letter-spacing:0px;transform:scaleX(1.0646);">Draft (v1)</div>
<div class="t" style="left:352.05px;top:1179.40px;font-weight:400;font-size:20.3px;color:#777;letter-spacing:0px;transform:scaleX(0.9479);">Showing 5 out of 5 entries.</div>
<!-- cursor -->
<svg class="i" style="left:980px;top:645px;will-change:transform;z-index:5" width="30" height="40" viewBox="980 645 30 40"><path d="M989.6,654.4 L989.6,672.5 L993.9,668.4 L997.2,676.3 L1000.2,675 L996.9,667.3 L1002.6,667.1 Z" fill="#000" stroke="#fff" stroke-width="2.4" stroke-linejoin="round" paint-order="stroke"/></svg>
</div>
</div>
<div id="topline"></div><div style="position:absolute;left:2px;top:1px;width:2000px;height:1px;background:rgba(40,20,10,0.45)"></div><div style="position:absolute;left:2px;top:1px;width:1px;height:104px;background:rgba(255,255,255,0.3)"></div><div style="position:absolute;left:1px;top:1px;width:1px;height:104px;background:rgba(0,0,0,0.55)"></div><div style="position:absolute;left:1px;top:105px;width:1px;height:1095px;background:rgba(0,0,0,0.85)"></div>
</body></html>
